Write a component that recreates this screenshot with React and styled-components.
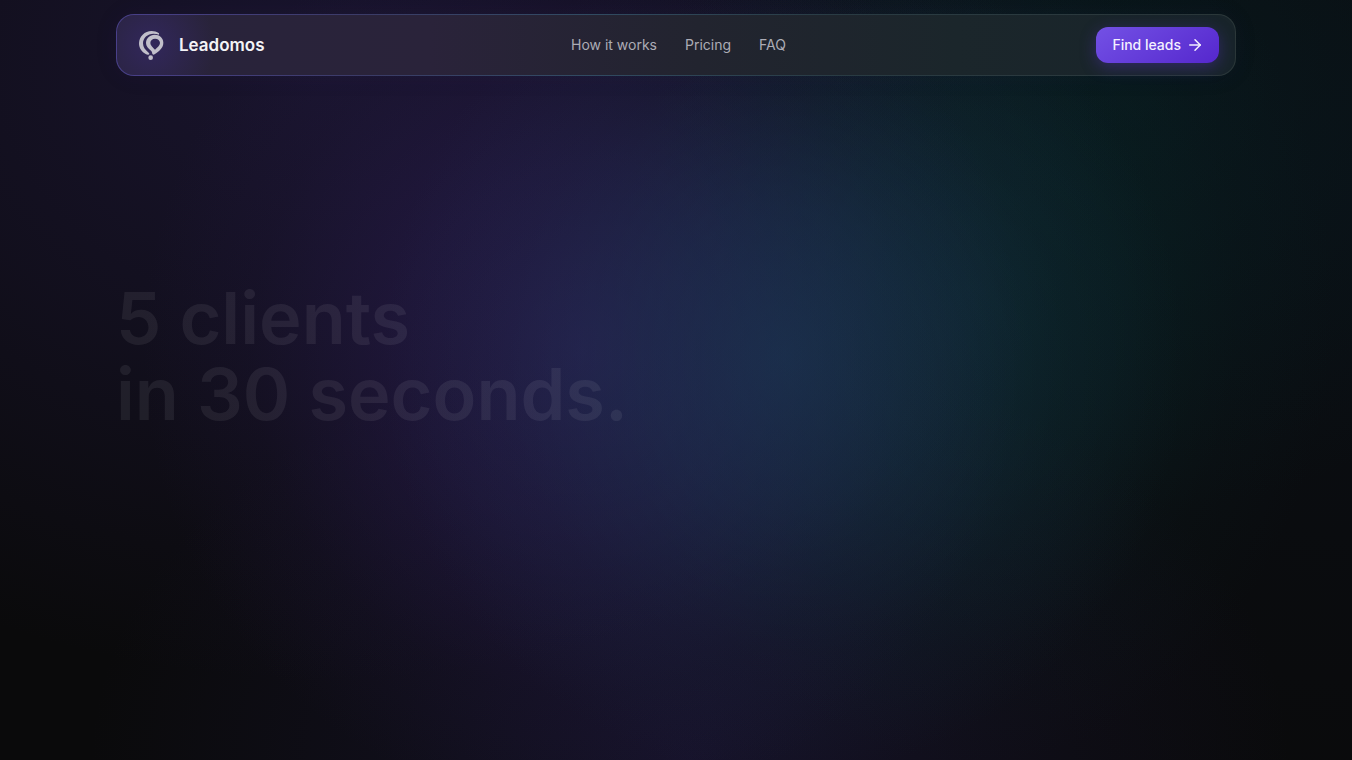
import styled, { createGlobalStyle } from 'styled-components'
import { ArrowRight } from 'lucide-react'

const GlobalStyle = createGlobalStyle`
  * {
    box-sizing: border-box;
  }

  body {
    margin: 0;
    background: #0a0a0b;
    color: #f4f4f6;
    font-family: Inter, "Liberation Sans", sans-serif;
  }
`

const Page = styled.div`
  min-height: 100vh;
  padding: 14px 24px 0;
  background:
    radial-gradient(ellipse 400px 420px at 58% 47%, rgba(28, 64, 96, 0.54), rgba(28, 64, 96, 0.36) 35%, rgba(28, 64, 96, 0.12) 70%, transparent),
    radial-gradient(ellipse 440px 460px at 43% 46%, rgba(56, 38, 112, 0.5), rgba(52, 34, 104, 0.34) 40%, rgba(50, 32, 96, 0.1) 75%, transparent),
    radial-gradient(ellipse 360px 460px at 72% 40%, rgba(10, 52, 54, 0.4), rgba(10, 52, 54, 0.28) 40%, rgba(10, 52, 54, 0.08) 75%, transparent),
    radial-gradient(ellipse 480px 420px at 84% 12%, rgba(6, 38, 42, 0.36), rgba(6, 38, 42, 0.18) 50%, transparent),
    radial-gradient(ellipse 800px 620px at 24% 8%, rgba(46, 34, 94, 0.42), rgba(46, 34, 94, 0.22) 50%, transparent),
    radial-gradient(ellipse 600px 420px at 51% 100%, rgba(40, 32, 88, 0.4), rgba(40, 32, 88, 0.18) 50%, transparent),
    radial-gradient(ellipse 560px 640px at 100% 24%, rgba(10, 22, 36, 0.36), transparent),
    #0a0a0b;
`

const Container = styled.div`
  width: 100%;
  max-width: 1120px;
  margin: 0 auto;
`

const Header = styled.header`
  display: grid;
  grid-template-columns: 1fr auto 1fr;
  align-items: center;
  height: 62px;
  padding: 0 16px 0 21px;
  border: 1px solid transparent;
  border-radius: 18px;
  background:
    radial-gradient(circle 64px at 34px 50%, rgba(66, 46, 150, 0.36), transparent) padding-box,
    linear-gradient(90deg, #28233a, #2a233a 28%, #22242f 52%, #1b262b 75%, #18242a) padding-box,
    linear-gradient(90deg, #49408a, #3b3b67 22%, #314b62 42%, #293b43 65%, #2b3739) border-box;
  box-shadow: 0 0 24px rgba(54, 38, 110, 0.08);
`

const Brand = styled.a`
  display: flex;
  align-items: center;
  justify-self: start;
  gap: 15px;
  color: #f4f4f6;
  font-size: 17px;
  font-weight: 600;
  line-height: 24px;
  text-decoration: none;
`

const LogoMark = styled.svg`
  display: block;
  width: 26px;
  height: 31px;
`

const Nav = styled.nav`
  display: flex;
  gap: 28px;
`

const NavLink = styled.a`
  color: #acacb5;
  font-size: 14px;
  line-height: 20px;
  text-decoration: none;
`

const FindButton = styled.button`
  display: flex;
  align-items: center;
  justify-self: end;
  gap: 5px;
  height: 36px;
  padding: 0 15px 0 16px;
  border: 0;
  border-radius: 12px;
  background: linear-gradient(145deg, #7351e5, #5527cd);
  box-shadow: 0 4px 16px rgba(94, 53, 210, 0.36);
  color: #f4f0ff;
  font-family: inherit;
  font-size: 14px;
  font-weight: 500;
  line-height: 20px;
  cursor: pointer;
`

const Hero = styled.main`
  padding: 204px 0 120px;
`

const Headline = styled.h1`
  margin: 0;
  color: rgba(255, 255, 255, 0.07);
  font-size: 72px;
  font-weight: 600;
  line-height: 76px;
`

const links = [
  { label: 'How it works', href: '#how-it-works' },
  { label: 'Pricing', href: '#pricing' },
  { label: 'FAQ', href: '#faq' },
]

function Logo() {
  return (
    <LogoMark viewBox="0 0 78 93" aria-hidden="true">
      <path
        fill="#c1bfca"
        d="M63 10C48 0 27 1 14 14C0 28 0 49 11 62C16 68 23 72 29 74C34 75 36 71 32 68C22 60 15 52 15 40C15 20 36 4 63 14Z"
      />
      <path
        fill="#c1bfca"
        fillRule="evenodd"
        d="M50 14C35 14 24 25 24 39C24 49 31 56 39 62C44 66 41 70 44 73C47 77 57 68 64 62C72 54 76 47 76 38C76 24 65 14 50 14ZM51 26C60 26 66 32 66 39C66 47 58 52 51 59C44 52 37 46 37 39C37 31 43 26 51 26Z"
      />
      <circle fill="#c1bfca" cx="38" cy="83" r="7" />
    </LogoMark>
  )
}

function App() {
  return (
    <Page>
      <GlobalStyle />
      <Container>
        <Header>
          <Brand href="#top">
            <Logo />
            Leadomos
          </Brand>
          <Nav aria-label="Main">
            {links.map((link) => (
              <NavLink key={link.href} href={link.href}>
                {link.label}
              </NavLink>
            ))}
          </Nav>
          <FindButton type="button">
            Find leads
            <ArrowRight size={18} strokeWidth={2} aria-hidden="true" />
          </FindButton>
        </Header>
        <Hero>
          <Headline>
            5 clients
            <br />
            in 30 seconds.
          </Headline>
        </Hero>
      </Container>
    </Page>
  )
}

export default App
